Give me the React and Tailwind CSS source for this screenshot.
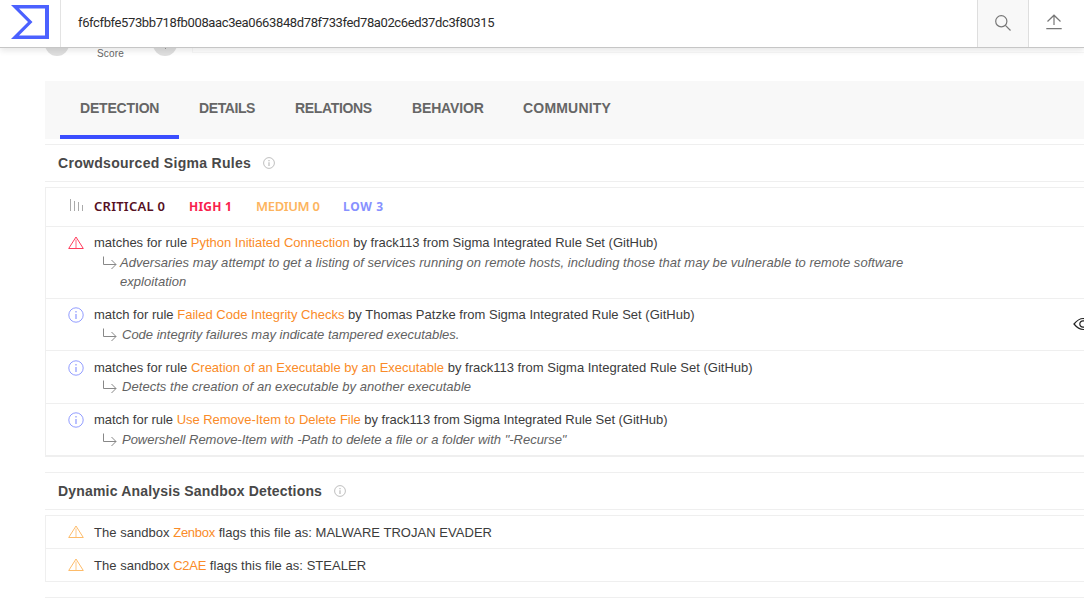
import React from 'react';

const WarningIcon = ({ className }) => (
  <svg className={`h-4 w-4 shrink-0 ${className}`} viewBox="0 0 16 16" fill="none" stroke="currentColor">
    <path d="M8 2 L15.3 13.5 H0.7 Z" strokeLinejoin="round" />
    <path d="M8 4.5 V13" strokeWidth="1.6" opacity="0.5" />
  </svg>
);

const InfoIcon = ({ className }) => (
  <svg className={`shrink-0 ${className}`} viewBox="0 0 16 16" fill="none" stroke="currentColor">
    <circle cx="8" cy="8" r="7.2" />
    <path d="M8 7 V12 M8 4 V5.6" strokeWidth="1.8" opacity="0.7" />
  </svg>
);

const ReplyArrow = () => (
  <svg className="h-[14px] w-[15px] shrink-0 text-[#888]" viewBox="0 0 15 14" fill="none" stroke="currentColor">
    <path d="M1.5 0.5 V8.5 H14 M9.5 4 L14 8.5 L9.5 13" />
  </svg>
);

function Header() {
  return (
    <header className="relative z-10 flex h-12 shrink-0 border-b border-[#c6c6c6] bg-white shadow-[0_3px_6px_rgba(0,0,0,0.09)]">
      <div className="flex w-[61px] shrink-0 border-r border-[#e3e3e3] pl-[11px] pt-[5px]">
        <svg className="h-[34px] w-[38px]" viewBox="0 0 38 34">
          <path fillRule="evenodd" fill="#4b61ff" d="M0 0 H38 V34 H0 L17 17 Z M8 3.5 L21.5 17 L8 30.5 H34 V3.5 Z" />
        </svg>
      </div>
      <div className="flex flex-1 items-center pb-px pl-[17px] font-['Roboto',sans-serif] text-[13px] tracking-[-0.378px] text-[#2b2b2b]">
        <span className="whitespace-nowrap">f6fcfbfe573bb718fb008aac3ea0663848d78f733fed78a02c6ed37dc3f80315</span>
      </div>
      <div className="flex w-[52px] justify-center border-x border-[#dedede] bg-[#f8f8f8] pt-[15px]">
        <svg className="h-4 w-4 text-[#777]" viewBox="0 0 16 16" fill="none" stroke="currentColor" strokeWidth="1.2">
          <circle cx="6.3" cy="6.3" r="5.6" />
          <path d="M10.4 10.4 L15.5 15.5" />
        </svg>
      </div>
      <div className="flex w-[55px] pl-[17px] pt-[14px]">
        <svg className="h-4 w-4 text-[#777]" viewBox="0 0 16 16" fill="none" stroke="currentColor" strokeWidth="1.2">
          <path d="M8 11 V1.2 M1.5 7.5 L8 1.2 L14.5 7.5 M0.3 14.6 H15.7" />
        </svg>
      </div>
    </header>
  );
}

function Score() {
  return (
    <div className="flex h-[33px] shrink-0 items-start overflow-hidden pl-[45px]">
      <div className="-mt-[16px] h-6 w-6 rounded-full bg-[#dfdfdf]" />
      <div className="ml-7 w-7 text-[10px] leading-3 tracking-[0.15px] text-[#666]">Score</div>
      <div className="-mt-[16px] ml-7 flex h-6 w-6 justify-center rounded-full bg-[#dfdfdf] pt-[16px]">
        <span className="h-px w-px bg-[#999]" />
      </div>
      <div className="ml-[15px] h-[5px] flex-1 border-b border-l border-[#f7f7f7]" />
    </div>
  );
}

const tabs = [
  ['DETECTION', 'w-[119px] border-[#3b4eff] tracking-[-0.18px] pl-5'],
  ['DETAILS', 'w-[96px] border-transparent tracking-[-0.4px] pl-5'],
  ['RELATIONS', 'w-[117px] border-transparent tracking-[-0.33px] pl-5'],
  ['BEHAVIOR', 'w-[111px] border-transparent tracking-[-0.15px] pl-5'],
  ['COMMUNITY', 'w-[129px] border-transparent tracking-[0.2px] pl-5'],
];

function SectionTitle({ title, tracking }) {
  return (
    <div className="ml-[45px] flex h-[38px] shrink-0 items-center border-y border-[#efefef] pl-[13px]">
      <h2 className={`whitespace-nowrap text-[14px] font-bold leading-5 text-[#484848] ${tracking}`}>{title}</h2>
      <InfoIcon className="ml-3 h-3 w-3 text-[#aaa]" />
    </div>
  );
}

const rules = [
  {
    verb: 'matches', name: 'Python Initiated Connection', author: 'frack113', high: true, box: 'h-[72px] pt-[6px]',
    title: 'tracking-[-0.005px]', note: 'tracking-[0.043px]',
    lines: ['Adversaries may attempt to get a listing of services running on remote hosts, including those that may be vulnerable to remote software', 'exploitation'],
  },
  { verb: 'match', name: 'Failed Code Integrity Checks', author: 'Thomas Patzke', box: 'h-[52px] pt-[6px]', title: 'tracking-[0.01px]', note: 'tracking-normal', eye: true, lines: ['Code integrity failures may indicate tampered executables.'] },
  { verb: 'matches', name: 'Creation of an Executable by an Executable', author: 'frack113', box: 'h-[53px] pt-[7px]', title: 'tracking-[0.005px]', note: 'tracking-[0.05px] -mt-px', lines: ['Detects the creation of an executable by another executable'] },
  { verb: 'match', name: 'Use Remove-Item to Delete File', author: 'frack113', box: 'h-[52px] pt-[6px]', title: 'tracking-[-0.03px]', note: 'tracking-[-0.015px]', lines: ['Powershell Remove-Item with -Path to delete a file or a folder with "-Recurse"'] },
];

function Rule({ rule }) {
  return (
    <div className={`flex shrink-0 border-b border-[#efefef] pl-[22px] ${rule.box}`}>
      <div className="pt-[2px]">
        {rule.high ? <WarningIcon className="text-[#ff3b5c]" /> : <InfoIcon className="h-4 w-4 text-[#929dff]" />}
      </div>
      <div className="ml-[10px] flex-1 whitespace-nowrap">
        <p className={`leading-5 text-[#3c3c3c] ${rule.title}`}>
          {rule.verb} for rule <span className="text-[#fa8b28]">{rule.name}</span> by {rule.author} from Sigma Integrated Rule Set (GitHub)
        </p>
        <div className={`flex pl-2 ${rule.high ? 'gap-[3px]' : 'gap-[5px]'} ${rule.note}`}>
          <div className="pt-[3px]"><ReplyArrow /></div>
          <div className="italic leading-[19px] text-[#626262]">
            {rule.lines.map((line) => <p key={line}>{line}</p>)}
          </div>
        </div>
      </div>
      {rule.eye && (
        <div className="w-[11px] overflow-hidden pt-[11px]">
          <svg className="h-4 w-[22px] text-[#222]" viewBox="0 0 22 16" fill="none" stroke="currentColor" strokeWidth="1.2">
            <path d="M1 8 Q10 -3 20 8 Q10 19 1 8 Z" />
            <circle cx="10" cy="8" r="3.2" />
          </svg>
        </div>
      )}
    </div>
  );
}

function Sandbox({ name, verdict }) {
  return (
    <div className="flex h-[33px] items-center border-b border-[#efefef] pl-[22px]">
      <WarningIcon className="text-[#fdbb69]" />
      <p className="ml-[10px] pt-px tracking-[0.035px] text-[#3c3c3c]">
        The sandbox <span className="tracking-[-0.25px] text-[#fa8b28]">{name}</span> flags this file as: {verdict}
      </p>
    </div>
  );
}

export default function App() {
  return (
    <div className="flex h-[610px] w-[1084px] flex-col overflow-hidden bg-white font-['Liberation_Sans',Arial,sans-serif] text-[13px]">
      <Header />
      <Score />
      <nav className="ml-[45px] flex h-[58px] shrink-0 bg-[#f8f8f8] pl-[15px]">
        {tabs.map(([label, style]) => (
          <div key={label} className={`flex h-full items-center border-b-4 text-[14px] font-bold text-[#666] ${style}`}>
            {label}
          </div>
        ))}
      </nav>
      <div className="h-[5px] shrink-0" />
      <SectionTitle title="Crowdsourced Sigma Rules" tracking="tracking-[0.3px]" />
      <div className="ml-[45px] mt-[5px] shrink-0 border-b border-l border-t border-[#efefef]">
        <div className="flex h-[39px] items-center border-b border-[#efefef] pl-6 font-['Noto_Sans',sans-serif] text-[13px] font-bold">
          <svg className="mb-[5px] h-3 w-[14px] text-[#aaa]" viewBox="0 0 14 12" stroke="currentColor">
            <path d="M0.5 0 V12 M4.5 2 V12 M8.5 3 V12 M12.5 6 V12" />
          </svg>
          <span className="ml-[10px] w-[95px] font-semibold tracking-[0.25px] text-[#561023]">CRITICAL 0</span>
          <span className="w-[67px] text-[12px] tracking-[0.25px] text-[#f91e4c]">HIGH 1</span>
          <span className="w-[87px] font-semibold tracking-[-0.35px] text-[#fdb45e]">MEDIUM 0</span>
          <span className="text-[12px] tracking-[0.7px] text-[#8791ff]">LOW 3</span>
        </div>
        {rules.map((rule) => <Rule key={rule.name} rule={rule} />)}
      </div>
      <div className="h-[15px] shrink-0" />
      <SectionTitle title="Dynamic Analysis Sandbox Detections" tracking="tracking-[0.18px]" />
      <div className="ml-[45px] mt-[5px] shrink-0 border-l border-t border-[#efefef]">
        <Sandbox name="Zenbox" verdict="MALWARE TROJAN EVADER" />
        <Sandbox name="C2AE" verdict="STEALER" />
      </div>
      <div className="ml-[45px] mt-[15px] h-px shrink-0 bg-[#efefef]" />
    </div>
  );
}
